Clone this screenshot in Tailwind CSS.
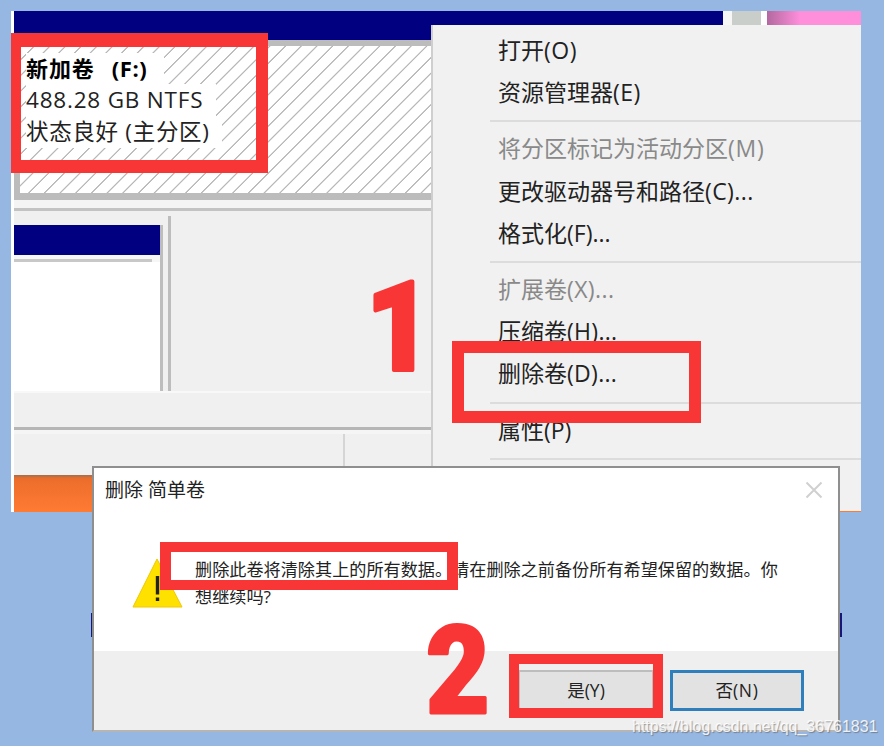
<!doctype html>
<html lang="zh-CN">
<head>
  <meta charset="UTF-8">
  <meta name="viewport" content="width=device-width, initial-scale=1.0">
  <title>删除 简单卷</title>
  <script src="https://cdn.jsdelivr.net/npm/@tailwindcss/browser@4"></script>
</head>

<body class="relative w-[884px] h-[746px] overflow-hidden bg-[#96b7e2] font-['Open_Sans','Noto_Sans_CJK_SC',sans-serif] text-[#222]">

  <!-- Disk management window -->
  <main class="absolute left-[11px] top-[11px] w-[850px] h-[501px] flex flex-col bg-[#f0f0f0] border-l-3 border-white">
    <div class="flex h-[29px] shrink-0">
      <div class="w-[709px] bg-[#000080]"></div>
      <div class="w-[9px] bg-[#f6f6f6]"></div>
      <div class="w-[29px] bg-[#c9cecb]"></div>
      <div class="w-[6px] bg-white"></div>
      <div class="grow bg-linear-to-r from-[#b368a0] to-[#ff8edb] to-35%"></div>
    </div>

    <!-- Partition F: -->
    <section class="h-[160px] shrink-0 border-l-6 border-t-6 border-b-7 border-[#bcbcbc] bg-white bg-[repeating-linear-gradient(135deg,#fff_0px,#fff_9.2px,#b8b8b8_9.9px,#b8b8b8_10.5px,#fff_11.1px)] pt-[7px] pl-[6px] text-[22.5px] leading-[32px] whitespace-nowrap">
      <p class="w-[138px] bg-white font-bold text-[22px] leading-[31px] text-black"><span class="tracking-[0.9px]">新加卷</span><span class="ml-[17px] tracking-[0.6px]">(F:)</span></p>
      <p class="w-[190px] bg-white tracking-[0.8px]">488.28 GB NTFS</p>
      <p class="w-[196px] bg-white tracking-[0.7px]">状态良好 (主分区)</p>
    </section>

    <div class="h-[8px] shrink-0 bg-[#f4f4f4]"></div>
    <div class="h-[3px] shrink-0 bg-[#c3c3c3]"></div>

    <section class="flex h-[182px] shrink-0 border-b-2 border-[#f8f8f8]">
      <div class="w-[149px] mt-[14px] border-r-3 border-[#bdbdbd] bg-[#f6f6f6]">
        <div class="h-[30px] bg-[#000080]"></div>
        <div class="mt-[4px] mr-[8px] h-[3px] bg-[#c8c8c8]"></div>
        <div class="h-[129px] bg-white"></div>
      </div>
      <div class="ml-[5px] mt-[5px] w-[3px] bg-[#bdbdbd]"></div>
    </section>

    <div class="h-[34px] shrink-0"></div>
    <div class="h-[3px] shrink-0 bg-[#b6b6b6]"></div>
    <div class="h-[4px] shrink-0 bg-[#f5f5f5]"></div>
    <div class="h-[41px] shrink-0 pl-[329px]">
      <div class="h-full w-[2px] bg-[#d5d5d5]"></div>
    </div>
    <div class="grow bg-linear-to-b from-[#a56d48] via-[#ec6d2b] via-10% to-[#ff7b34]"></div>
  </main>

  <!-- Context menu -->
  <nav class="absolute left-[431px] top-[25px] w-[430px] h-[486px] bg-[#f1f1f1] border-l-2 border-[#cfcfcf] pt-[5px] text-[23px] leading-[40px] whitespace-nowrap">
    <ul class="pl-[65px]">
      <li class="h-[42.2px]">打开<span class="tracking-[0.5px]">(O)</span></li>
      <li class="h-[42.2px]">资源管理器<span class="tracking-[0.5px]">(E)</span></li>
    </ul>
    <div class="ml-[57px] h-[14px] py-[6px]"><div class="h-[2px] bg-[#dcdcdc]"></div></div>
    <ul class="pl-[65px]">
      <li class="h-[42.2px] text-[#898989]">将分区标记为活动分区<span class="tracking-[0.8px]">(M)</span></li>
      <li class="h-[42.2px]">更改驱动器号和路径<span class="tracking-[0.4px]">(C)...</span></li>
      <li class="h-[42.2px]">格式化(F)...</li>
    </ul>
    <div class="ml-[57px] h-[14px] py-[6px]"><div class="h-[2px] bg-[#dcdcdc]"></div></div>
    <ul class="pl-[65px]">
      <li class="h-[42.2px] text-[#898989]">扩展卷<span class="tracking-[0.4px]">(X)...</span></li>
      <li class="h-[42.2px]">压缩卷<span class="tracking-[0.3px]">(H)...</span></li>
      <li class="h-[42.2px]">删除卷<span class="tracking-[0.3px]">(D)...</span></li>
    </ul>
    <div class="ml-[57px] h-[14px] py-[6px]"><div class="h-[2px] bg-[#dcdcdc]"></div></div>
    <ul class="pl-[65px]">
      <li class="h-[42.2px]">属性(P)</li>
    </ul>
    <div class="ml-[57px] h-[14px] py-[6px]"><div class="h-[2px] bg-[#dcdcdc]"></div></div>
  </nav>

  <!-- Confirm dialog -->
  <div class="absolute left-[91px] top-[613px] w-[751px] h-[24px] bg-[#17177a]"></div>
  <div class="absolute left-[92px] top-[466px] w-[748px] h-[266px] flex flex-col bg-white border-2 border-[#8f8f8f] border-b-[#b5b5b5]">
    <header class="flex h-[43px] items-center justify-between pl-[11px] pr-[15px] text-[19px]">
      <h1 class="pt-[2px]">删除 简单卷</h1>
      <svg class="size-[18px]" viewBox="0 0 18 18" fill="none" stroke="#d0d0d0" stroke-width="2"><path d="M1.500 1.500L16.500 16.500M16.500 1.500L1.500 16.500" /></svg>
    </header>
    <div class="flex h-[140px] pl-[38px] pt-[45px]">
      <svg class="mt-[2px] w-[51px] h-[50px] shrink-0" viewBox="0 0 51 50">
        <path d="M25 1L50 49H1Z" fill="#ffe100" stroke="#f0c800" stroke-width="1" stroke-linejoin="round" />
        <path d="M25.500 18V36.500" stroke="#222" stroke-width="3.400" />
        <path d="M25.500 39.500V43" stroke="#222" stroke-width="3.400" />
      </svg>
      <p class="ml-[12px] w-[610px] text-[17.150px] leading-[27px]">删除此卷将清除其上的所有数据。请在删除之前备份所有希望保留的数据。你<br>想继续吗?</p>
    </div>
    <footer class="flex grow items-start bg-[#efefef] pl-[424px] pt-[19px] text-[17.5px]">
      <button class="w-[136px] h-[41px] border-2 border-[#bdbdbd] bg-[#e2e2e2] pb-px">是(Y)</button>
      <button class="ml-[16px] w-[134px] h-[41px] border-3 border-[#2f7fbc] bg-[#e2e2e2] pb-px">否<span class="tracking-[0.6px]">(N)</span></button>
    </footer>
  </div>

  <!-- Red marks -->
  <div class="absolute left-[11px] top-[33px] w-[257px] h-[140px] border-x-[12px] border-l-[10px] border-t-[14px] border-b-[13px] border-[#f93636]"></div>
  <div class="absolute left-[452px] top-[341px] w-[249px] h-[82px] border-[12px] border-[#f93636]"></div>
  <div class="absolute left-[160px] top-[542px] w-[298px] h-[48px] border-[10px] border-x-[11px] border-[#f93636]"></div>
  <div class="absolute left-[509px] top-[654px] w-[154px] h-[64px] border-[10px] border-[#f93636]"></div>

  <svg class="absolute left-0 top-0 w-[884px] h-[746px] font-['Roboto'] font-black" fill="#f93636" stroke="#f93636" stroke-linejoin="round">
    <text transform="translate(366 370) scale(0.92 1)" font-size="124" stroke-width="4">1</text>
    <text transform="translate(426 713) scale(0.9 1)" font-size="122" stroke-width="3">2</text>
  </svg>

  <!-- Watermark -->
  <p class="absolute left-[632px] top-[717px] font-['Liberation_Sans'] text-[16px] leading-[20px] whitespace-nowrap text-white/85 [text-shadow:1px_1px_1px_rgba(90,90,90,0.6)]">https://blog.csdn.net/qq_36761831</p>

</body>
</html>
